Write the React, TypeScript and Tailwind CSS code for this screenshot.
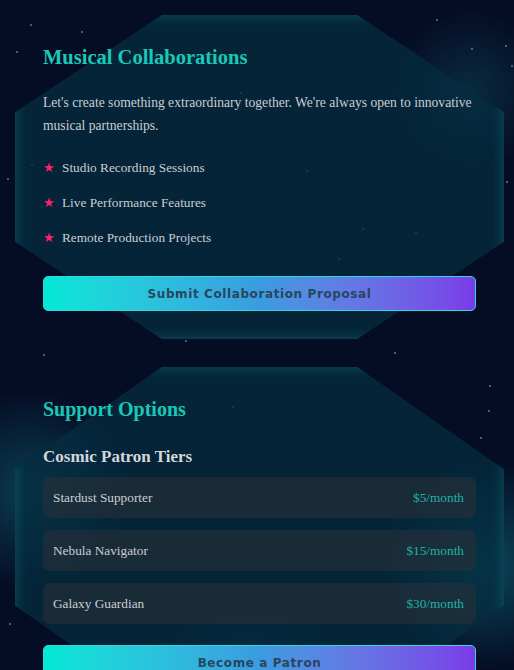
import React from "react";

const stars: [number, number, number][] = [
  [30, 24, 2], [81, 31, 1.5], [16, 51, 1.5], [436, 19, 2], [471, 48, 1.5], [505, 45, 1.5],
  [31, 164, 2], [7, 178, 2], [511, 65, 1.5], [506, 181, 2], [185, 340, 2], [394, 352, 2],
  [43, 354, 2], [489, 385, 2], [488, 410, 2], [480, 437, 2], [9, 623, 2], [240, 92, 1.5],
  [306, 170, 1.5], [362, 228, 2], [338, 258, 1.5], [415, 232, 1.5], [232, 406, 1.5],
];

function Card({ children }: { children: React.ReactNode }) {
  return (
    <div className="relative p-7">
      <div className="absolute inset-0 [clip-path:polygon(30%_0,70%_0,100%_30%,100%_70%,70%_100%,30%_100%,0_70%,0_30%)] bg-[rgba(6,44,64,0.74)] shadow-[inset_0_0_14px_rgba(30,200,200,0.3)]" />
      <div className="relative">{children}</div>
    </div>
  );
}

function GradientButton({ label }: { label: string }) {
  return (
    <button className="w-full h-[35px] rounded-[5px] border border-[#2fd9e0] bg-gradient-to-r from-[#00e8d6] via-[#3a9ce0] to-[#7a3ae8] text-[#28465f] text-[12px] tracking-[0.6px] font-semibold [font-family:'DejaVu_Sans',sans-serif]">
      {label}
    </button>
  );
}

export default function App() {
  const serif = "[font-family:'Liberation_Serif','Times_New_Roman',serif]";
  return (
    <div className={`relative min-h-[670px] h-[670px] overflow-hidden bg-[#050d25] ${serif}`}>
      {/* glows */}
      <div className="pointer-events-none absolute left-[390px] top-[10px] w-[160px] h-[160px] rounded-full bg-[radial-gradient(circle,rgba(20,120,130,0.28),rgba(20,120,130,0)_70%)]" />
      <div className="pointer-events-none absolute left-[-70px] top-[390px] w-[200px] h-[200px] rounded-full bg-[radial-gradient(circle,rgba(20,150,160,0.35),rgba(20,150,160,0)_70%)]" />
      <div className="pointer-events-none absolute left-[380px] top-[460px] w-[210px] h-[210px] rounded-full bg-[radial-gradient(circle,rgba(20,150,160,0.42),rgba(20,150,160,0)_70%)]" />
      <div className="pointer-events-none absolute left-[140px] top-[610px] w-[220px] h-[120px] rounded-full bg-[radial-gradient(circle,rgba(20,120,140,0.2),rgba(20,120,140,0)_70%)]" />
      {stars.map(([x, y, s], i) => (
        <div
          key={i}
          className="absolute rounded-full bg-[#8fa3c0] opacity-70"
          style={{ left: x, top: y, width: s, height: s }}
        />
      ))}

      <div className="relative flex flex-col gap-[28px] pl-[15px] pr-[10px] pt-[15px]">
        <Card>
          <h2 className="text-[20.5px] leading-[28px] font-bold text-[#17c9b9]">Musical Collaborations</h2>
          <p className="mt-[20px] text-[13.6px] leading-[23px] text-[#c9ced4]">
            Let's create something extraordinary together. We're always open to innovative musical partnerships.
          </p>
          <ul className="mt-[19px] flex flex-col gap-[12px] text-[13.3px] leading-[23px] text-[#c9ced4]">
            {["Studio Recording Sessions", "Live Performance Features", "Remote Production Projects"].map((t) => (
              <li key={t} className="flex items-center">
                <span className="w-[19px] text-[#ff1f6e] text-[13px] [font-family:'DejaVu_Sans',sans-serif]">★</span>
                {t}
              </li>
            ))}
          </ul>
          <div className="mt-[27px]">
            <GradientButton label="Submit Collaboration Proposal" />
          </div>
        </Card>

        <Card>
          <h2 className="text-[20px] leading-[28px] font-bold text-[#17c9b9]">Support Options</h2>
          <h3 className="mt-[22px] text-[17px] leading-[24px] font-bold text-[#d3d7dc]">Cosmic Patron Tiers</h3>
          <div className="mt-[8px] flex flex-col gap-[12px]">
            {[
              ["Stardust Supporter", "$5/month"],
              ["Nebula Navigator", "$15/month"],
              ["Galaxy Guardian", "$30/month"],
            ].map(([n, p]) => (
              <div
                key={n}
                className="h-[41px] rounded-[7px] bg-[rgba(40,48,56,0.6)] flex items-center justify-between pl-[10px] pr-[12px] text-[13.3px]"
              >
                <span className="text-[#c9ced4]">{n}</span>
                <span className="text-[#1fb3a6]">{p}</span>
              </div>
            ))}
          </div>
          <div className="mt-[21px]">
            <GradientButton label="Become a Patron" />
          </div>
        </Card>
      </div>
    </div>
  );
}
